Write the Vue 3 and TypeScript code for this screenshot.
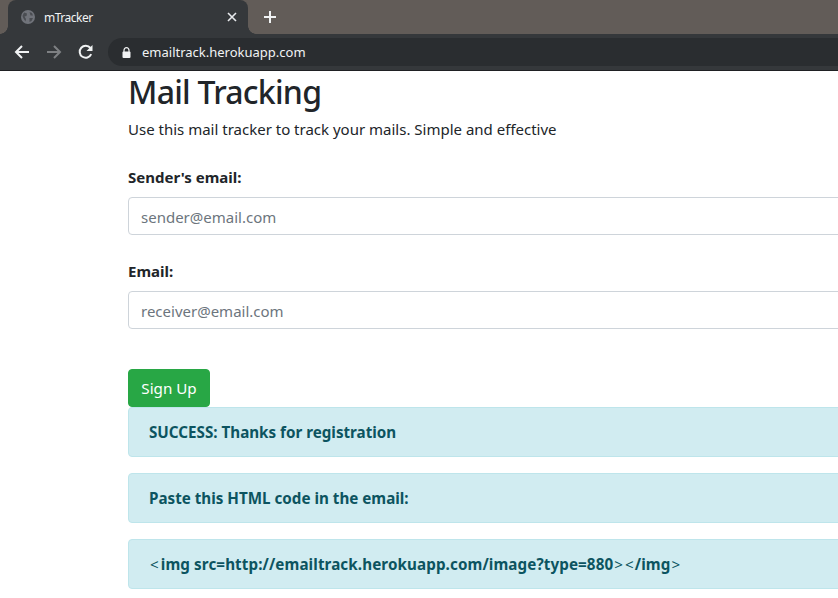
<script setup lang="ts">
const alerts: string[] = [
  'SUCCESS: Thanks for registration',
  'Paste this HTML code in the email:',
]
</script>

<template>
  <div class="window">
    <header class="chrome">
      <div class="strip">
        <div class="tab">
          <svg class="globe" width="14" height="14" viewBox="0 0 14 14">
            <circle cx="7" cy="7" r="7" fill="#70737a" />
            <path d="M3 2.5 6 3.5 5.5 6 3.5 6.5 5 9 4.5 11.5 2.5 8.5 1.5 6ZM8.5 2 11 3 12 5.5 9.5 5.5ZM8.5 8 12 8 10.5 11 8.5 12Z" fill="#4a4d52" />
          </svg>
          <span class="tab-title">mTracker</span>
          <svg class="close" width="10" height="10" viewBox="0 0 10 10">
            <path d="M1 1 9 9M9 1 1 9" stroke="#e8eaed" stroke-width="1.6" fill="none" />
          </svg>
        </div>
        <svg class="plus" width="12" height="12" viewBox="0 0 12 12">
          <path d="M6 0V12M0 6H12" stroke="#f1f3f4" stroke-width="2" fill="none" />
        </svg>
      </div>
      <div class="toolbar">
        <svg class="nav" width="16" height="16" viewBox="0 0 16 16">
          <path d="M15 8H2M8 2 2 8 8 14" stroke="#f1f3f4" stroke-width="2" fill="none" />
        </svg>
        <svg class="nav" width="16" height="16" viewBox="0 0 16 16">
          <path d="M1 8H14M8 2 14 8 8 14" stroke="#7e8083" stroke-width="2" fill="none" />
        </svg>
        <svg class="nav" width="16" height="16" viewBox="0 0 16 16">
          <path d="M13.2 10.2A6 6 0 1 1 12.4 4" stroke="#f1f3f4" stroke-width="2" fill="none" />
          <path d="M14.5 1V7H8.5Z" fill="#f1f3f4" />
        </svg>
        <div class="omnibox">
          <svg width="9" height="11" viewBox="0 0 9 11">
            <path d="M2 5V3.2a2.5 2.5 0 0 1 5 0V5" stroke="#f1f3f4" stroke-width="1.2" fill="none" />
            <rect x="0.5" y="4.5" width="8" height="6.5" rx="1" fill="#f1f3f4" />
          </svg>
          <span class="url">emailtrack.herokuapp.com</span>
        </div>
      </div>
    </header>

    <main class="page">
      <h1>Mail Tracking</h1>
      <p class="lead">Use this mail tracker to track your mails. Simple and effective</p>
      <form class="form" @submit.prevent>
        <div class="group">
          <label for="sender">Sender's email:</label>
          <input id="sender" type="text" placeholder="sender@email.com" />
        </div>
        <div class="group">
          <label for="receiver">Email:</label>
          <input id="receiver" type="text" placeholder="receiver@email.com" />
        </div>
        <button type="submit">Sign Up</button>
      </form>
      <div v-for="text in alerts" :key="text" class="alert">{{ text }}</div>
      <div class="alert code"><span class="angle first">&lt;</span>img src=http://emailtrack.herokuapp.com/image?type=880<span class="angle">&gt;</span><span class="angle">&lt;</span>/img<span class="angle">&gt;</span></div>
    </main>
  </div>
</template>

<style scoped>
.window {
  width: 838px;
  height: 598px;
  overflow: hidden;
  background: #fff;
  font-family: "Noto Sans", "Open Sans", sans-serif;
}
.chrome {
  height: 71px;
  border-bottom: 1px solid #1f2023;
  box-sizing: border-box;
  background: #35383b;
}
.strip {
  height: 34px;
  background: #625c58;
  display: flex;
  align-items: center;
  padding-left: 8px;
}
.tab {
  position: relative;
  width: 240px;
  height: 34px;
  box-sizing: border-box;
  background: #35383b;
  border-radius: 8px 8px 0 0;
  display: flex;
  align-items: center;
  padding: 0 11px 0 13px;
}
.tab::before,
.tab::after {
  content: "";
  position: absolute;
  bottom: 0;
  width: 8px;
  height: 8px;
}
.tab::before {
  left: -8px;
  background: radial-gradient(circle at 0 0, #625c58 7.5px, #35383b 8px);
}
.tab::after {
  right: -8px;
  background: radial-gradient(circle at 100% 0, #625c58 7.5px, #35383b 8px);
}
.tab-title {
  margin-left: 9px;
  flex: 1;
  font-size: 12px;
  color: #f1f3f4;
  letter-spacing: -0.5px;
}
.plus {
  margin-left: 16px;
}
.toolbar {
  height: 36px;
  display: flex;
  align-items: center;
  padding-left: 14px;
  gap: 16px;
}
.omnibox {
  flex: 1;
  height: 28px;
  margin-left: -2px;
  background: #2a2d30;
  border-radius: 14px 0 0 14px;
  display: flex;
  align-items: center;
  padding-left: 14px;
  gap: 11px;
}
.url {
  font-size: 13px;
  color: #f1f3f4;
}
.page {
  width: 1000px;
  padding-left: 128px;
  color: #212529;
  font-size: 16px;
  line-height: 24px;
}
h1 {
  margin: 0;
  font-size: 32px;
  font-weight: 500;
  line-height: 42px;
  letter-spacing: -0.75px;
}
.lead {
  margin: 4px 0 24px;
  font-size: 15px;
}
.form {
  margin-bottom: 0;
}
.group {
  margin-bottom: 24px;
}
label {
  display: block;
  margin-bottom: 8px;
  font-size: 15px;
  font-weight: 700;
}
input {
  display: block;
  width: 100%;
  height: 38px;
  box-sizing: border-box;
  padding: 7px 12px 5px;
  border: 1px solid #ced4da;
  border-radius: 4px;
  font: inherit;
  font-size: 15px;
  color: #495057;
}
input::placeholder {
  color: #6c757d;
  opacity: 1;
}
button {
  display: block;
  width: 82px;
  height: 38px;
  margin-top: 40px;
  padding: 0;
  border: 1px solid #28a745;
  border-radius: 4px;
  background: #28a745;
  color: #fff;
  font: inherit;
  font-size: 15.2px;
}
.alert {
  height: 50px;
  box-sizing: border-box;
  margin-bottom: 16px;
  padding: 12px 20px;
  border: 1px solid #bee5eb;
  border-radius: 4px;
  background: #d1ecf1;
  color: #0c5460;
  font-size: 15.2px;
  font-weight: 700;
}
.code {
  letter-spacing: 0.1px;
}
.angle {
  font-weight: 400;
  margin: 0 1px;
}
.angle.first {
  margin-left: 1px;
  margin-right: 2px;
}
</style>
